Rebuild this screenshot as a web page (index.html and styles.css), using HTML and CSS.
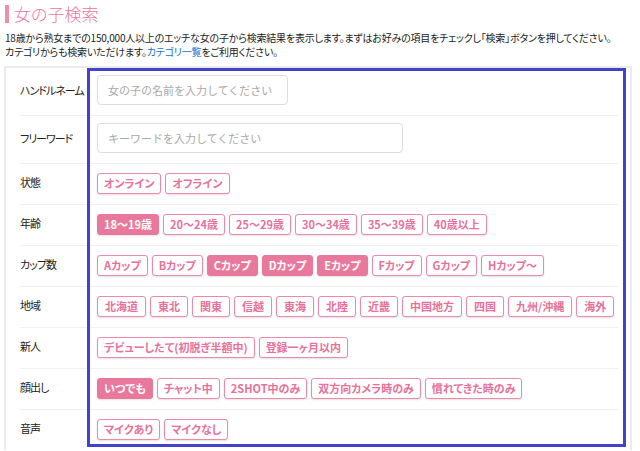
FILE: index.html
```html
<!DOCTYPE html>
<html lang="ja">
<head>
    <meta charset="UTF-8">
    <title>女の子検索</title>
    <link rel="stylesheet" href="styles.css">
</head>
<body>
<h1 class="title">女の子検索</h1>
<p class="lead">18歳から熟女までの150,000人以上のエッチな女の子から検索結果を表示します。まずはお好みの項目をチェックし「検索」ボタンを押してください。<br>カテゴリからも検索いただけます。<a href="#">カテゴリ一覧</a>をご利用ください。</p>

<div class="search">
    <div class="row">
        <div class="label">ハンドルネーム</div>
        <div class="field"><input class="text short" type="text" placeholder="女の子の名前を入力してください"></div>
    </div>
    <div class="row">
        <div class="label">フリーワード</div>
        <div class="field"><input class="text long" type="text" placeholder="キーワードを入力してください"></div>
    </div>
    <div class="row btns">
        <div class="label">状態</div>
        <div class="field">
            <span class="btn">オンライン</span>
            <span class="btn">オフライン</span>
        </div>
    </div>
    <div class="row btns">
        <div class="label">年齢</div>
        <div class="field">
            <span class="btn on">18～19歳</span>
            <span class="btn">20～24歳</span>
            <span class="btn">25～29歳</span>
            <span class="btn">30～34歳</span>
            <span class="btn">35～39歳</span>
            <span class="btn">40歳以上</span>
        </div>
    </div>
    <div class="row btns">
        <div class="label">カップ数</div>
        <div class="field">
            <span class="btn">Aカップ</span>
            <span class="btn">Bカップ</span>
            <span class="btn on">Cカップ</span>
            <span class="btn on">Dカップ</span>
            <span class="btn on">Eカップ</span>
            <span class="btn">Fカップ</span>
            <span class="btn">Gカップ</span>
            <span class="btn">Hカップ～</span>
        </div>
    </div>
    <div class="row btns area">
        <div class="label">地域</div>
        <div class="field">
            <span class="btn">北海道</span>
            <span class="btn">東北</span>
            <span class="btn">関東</span>
            <span class="btn">信越</span>
            <span class="btn">東海</span>
            <span class="btn">北陸</span>
            <span class="btn">近畿</span>
            <span class="btn">中国地方</span>
            <span class="btn">四国</span>
            <span class="btn">九州/沖縄</span>
            <span class="btn">海外</span>
        </div>
    </div>
    <div class="row btns">
        <div class="label">新人</div>
        <div class="field">
            <span class="btn">デビューしたて(初脱ぎ半額中)</span>
            <span class="btn">登録一ヶ月以内</span>
        </div>
    </div>
    <div class="row btns">
        <div class="label">顔出し</div>
        <div class="field">
            <span class="btn on">いつでも</span>
            <span class="btn">チャット中</span>
            <span class="btn">2SHOT中のみ</span>
            <span class="btn">双方向カメラ時のみ</span>
            <span class="btn">慣れてきた時のみ</span>
        </div>
    </div>
    <div class="row btns">
        <div class="label">音声</div>
        <div class="field">
            <span class="btn">マイクあり</span>
            <span class="btn">マイクなし</span>
        </div>
    </div>
</div>

<div class="focus"></div>
</body>
</html>
```

FILE: styles.css
```css
* {
    margin: 0;
    padding: 0;
    box-sizing: border-box;
}
body {
    position: relative;
    background: #fff;
    color: #222;
    font-family: "Noto Sans CJK JP", "Noto Sans", sans-serif;
    font-feature-settings: "palt";
    overflow: hidden;
}
.title {
    margin: 5px 0 0 5px;
    padding-left: 5px;
    border-left: 4px solid #ef8fab;
    height: 18px;
    line-height: 18px;
    font-size: 17px;
    font-weight: 300;
    color: #e9789b;
}
.lead {
    margin: 8px 0 0 5px;
    font-size: 10px;
    line-height: 14px;
    letter-spacing: -0.2px;
    white-space: nowrap;
}
.lead a {
    color: #1b6fd0;
    text-decoration: none;
}
.search {
    margin: 7px 8px 0 4px;
    padding: 0 12px 0 14px;
    border: 2px solid #ebebeb;
    border-bottom: none;
}
.row {
    display: flex;
    align-items: center;
    padding: 7px 0 10px;
    border-bottom: 1px solid #f0f0f0;
}
.row:last-child {
    border-bottom: none;
}
.row.btns {
    padding: 9px 0 10px;
}
.row.btns .label {
    margin-top: -4px;
}
.label {
    width: 77px;
    flex: none;
    font-size: 11px;
    line-height: 14px;
    letter-spacing: -1px;
    color: #222;
}
.field {
    display: flex;
    flex-wrap: wrap;
    gap: 4px;
}
.text {
    height: 30px;
    padding: 0 10px;
    border: 1px solid #ddd;
    border-radius: 4px;
    font-family: inherit;
    font-size: 11px;
    color: #333;
    outline: none;
}
.text::placeholder {
    color: #a9a9a9;
}
.short {
    width: 191px;
}
.long {
    width: 306px;
}
.btn {
    display: inline-block;
    height: 21px;
    line-height: 19px;
    padding: 0 6px;
    border: 1px solid #ec8aa8;
    border-radius: 3px;
    background: #fff;
    color: #e6729a;
    font-size: 11px;
    font-weight: bold;
    box-shadow: 0 1px 2px rgba(0, 0, 0, 0.12);
    cursor: pointer;
}
.area .btn {
    padding: 0 7px;
}
.btn.on {
    background: #e9799c;
    border-color: #e9799c;
    color: #fff;
}
.focus {
    position: absolute;
    left: 87px;
    top: 68px;
    width: 539px;
    height: 379px;
    border: 3px solid #4343c9;
    pointer-events: none;
}
```
